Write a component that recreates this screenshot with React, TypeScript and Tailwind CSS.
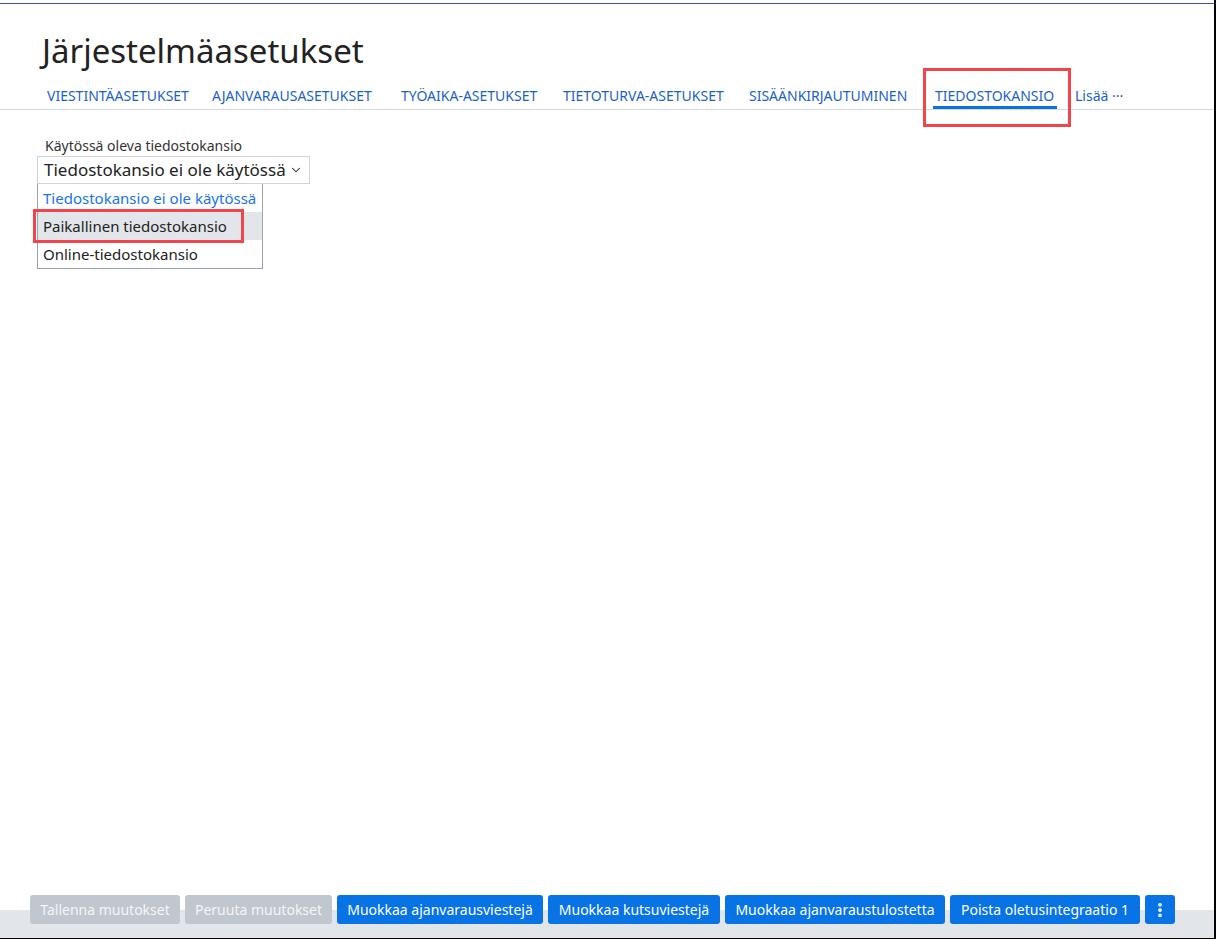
import React from "react";
import { ChevronDown, EllipsisVertical } from "lucide-react";

const tabs = [
  { label: "VIESTINTÄASETUKSET", w: "w-[147px]" },
  { label: "AJANVARAUSASETUKSET", w: "w-[171px]" },
  { label: "TYÖAIKA-ASETUKSET", w: "w-[144px]" },
  { label: "TIETOTURVA-ASETUKSET", w: "w-[168px]" },
  { label: "SISÄÄNKIRJAUTUMINEN", w: "w-[168px]" },
];

const options = ["Tiedostokansio ei ole käytössä", "Paikallinen tiedostokansio", "Online-tiedostokansio"];

const footerButtons = [
  { label: "Tallenna muutokset", w: "w-[150px]", disabled: true },
  { label: "Peruuta muutokset", w: "w-[147px]", disabled: true },
  { label: "Muokkaa ajanvarausviestejä", w: "w-[206px]" },
  { label: "Muokkaa kutsuviestejä", w: "w-[172px]" },
  { label: "Muokkaa ajanvaraustulostetta", w: "w-[220px]" },
  { label: "Poista oletusintegraatio 1", w: "w-[190px]" },
];

const App: React.FC = () => {
  return (
    <div className="w-full h-[940px] bg-white font-['Noto_Sans',sans-serif]">
      <div className="w-[1216px] h-[939px] pt-[3px] border-r-2 border-b border-black flex flex-col">
        <div className="border-t border-[#3f51a0]" />

        <div className="flex-1">
          <h1 className="pl-[42px] pt-[26px] text-[33px] leading-[42px] text-[#222]">Järjestelmäasetukset</h1>

          {/* tabs */}
          <div className="mt-[12px] pl-[45px] pr-[14px] flex items-end gap-[18px] border-b border-[#d3d9e0] text-[14px] text-[#1b5fc9]">
            {tabs.map((t) => (
              <div key={t.label} className={`${t.w} px-[2px] pt-[2px] pb-[3px] leading-[20px] whitespace-nowrap`}>
                {t.label}
              </div>
            ))}
            <div className="relative w-[124px]">
              <div className="px-[2px] pt-[2px] leading-[20px] border-b-[3px] border-[#0b72e3]">TIEDOSTOKANSIO</div>
              <div className="absolute -left-[10px] -right-[14px] -top-[16px] h-[59px] border-[3px] border-[#f2444b]" />
            </div>
            <div className="pt-[2px] pb-[3px] leading-[20px] text-[14px]">Lisää ···</div>
          </div>

          {/* folder select */}
          <div className="pl-[37px] pt-[26px]">
            <div className="pl-[8px] text-[14px] leading-[20px] text-[#333]">Käytössä oleva tiedostokansio</div>
            <div className="w-[273px] h-[28px] border border-[#d0d4d8] flex items-center pl-[6px] pr-[6px] text-[17px] text-[#222]">
              <span className="flex-1">Tiedostokansio ei ole käytössä</span>
              <ChevronDown size={14} strokeWidth={1.8} />
            </div>
            <div className="relative w-[226px] border border-[#9aa3ad] border-t-0 bg-white text-[15px]">
              {options.map((o, i) => (
                <div
                  key={o}
                  className={
                    i === 0
                      ? "h-[28px] pl-[5px] flex items-center text-[#1a73e8]"
                      : i === 1
                      ? "h-[28px] pl-[5px] flex items-center bg-[#e2e6ea] text-[#222]"
                      : "h-[28px] pl-[5px] flex items-center text-[#222]"
                  }
                >
                  {o}
                </div>
              ))}
              <div className="absolute -left-[5px] top-[25px] w-[211px] h-[34px] border-[3px] border-[#f2444b]" />
            </div>
          </div>
        </div>

        {/* footer */}
        <div className="h-[43px] pl-[30px] flex items-start gap-[5px] bg-[linear-gradient(to_bottom,#ffffff_15px,#e2e6ea_15px)]">
          {footerButtons.map((b) => (
            <button
              key={b.label}
              className={
                b.disabled
                  ? `${b.w} h-[29px] rounded-[3px] bg-[#c0c7cf] text-[#f4f6f8] text-[14px] whitespace-nowrap`
                  : `${b.w} h-[29px] rounded-[3px] bg-[#0873e4] text-white text-[14px] whitespace-nowrap`
              }
            >
              {b.label}
            </button>
          ))}
          <button className="h-[29px] w-[30px] rounded-[3px] bg-[#0873e4] text-white flex items-center justify-center">
            <EllipsisVertical size={18} strokeWidth={3} />
          </button>
        </div>
      </div>
    </div>
  );
};

export default App;
